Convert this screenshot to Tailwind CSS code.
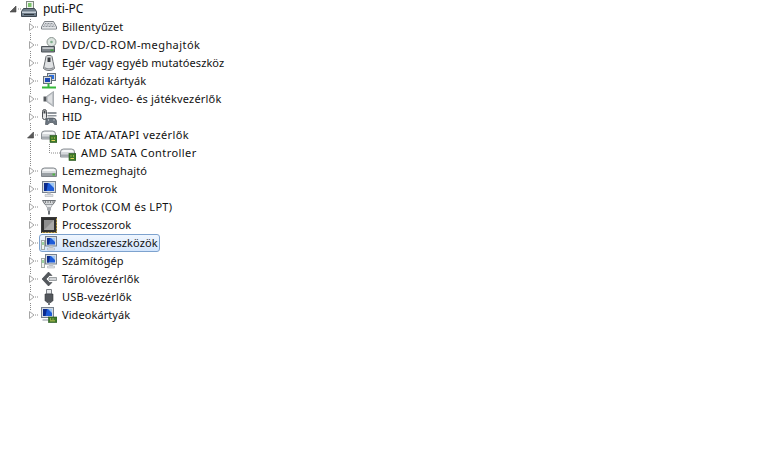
<!DOCTYPE html>
<html lang="en">
<head>
  <meta charset="UTF-8">
  <title>Eszközkezelő</title>
  <script src="https://cdn.jsdelivr.net/npm/@tailwindcss/browser@4"></script>
</head>
<body class="bg-white h-[462px] overflow-hidden font-['Noto_Sans',sans-serif] text-[11px] tracking-[0.08px] text-[#111]">
  <svg width="0" height="0" class="absolute">
    <defs>
      <!-- tree connector for a top level row -->
      <symbol id="line" viewBox="0 0 16 18">
        <path d="M7.500 1v1M7.500 3v1M7.500 15v1M7.500 17v1M12 9h1M14 9h1" stroke="#8a8a8a" fill="none"/>
      </symbol>
      <symbol id="lineEnd" viewBox="0 0 16 18">
        <path d="M7.500 1v1M7.500 3v1M12 9h1M14 9h1" stroke="#8a8a8a" fill="none"/>
      </symbol>
      <symbol id="closed" viewBox="0 0 16 18">
        <path d="M6.500 5.500v7l4.500-3.500z" fill="#fff" stroke="#a6a6a6"/>
      </symbol>
      <symbol id="open" viewBox="0 0 16 18">
        <path d="M10.500 6v6h-6z" fill="#595959" stroke="#404040" stroke-width=".6"/>
      </symbol>
      <symbol id="display" viewBox="0 0 16 16">
        <rect x="1.500" y=".5" width="13" height="11" fill="#d5dbe2" stroke="#77818e"/>
        <rect x="3" y="2" width="10" height="8" fill="#1d5bd8"/>
        <path d="M3 2h4l-1.500 8H3z" fill="#0a2a8c"/>
        <path d="M8 2h5v5z" fill="#9cc6f4"/>
        <path d="M6.500 11.500h3l.5 2h-4z" fill="#c3c7cc"/>
        <path d="M4 13.500h8v2H4z" fill="#e1e3e6" stroke="#a4a9b0" stroke-width=".5"/>
      </symbol>
      <symbol id="system" viewBox="0 0 16 16">
        <rect x="4.500" y="1.500" width="11" height="9.500" fill="#d5dbe2" stroke="#77818e"/>
        <rect x="6" y="3" width="8" height="6.500" fill="#1d5bd8"/>
        <path d="M6 3h3l-1 6.500H6z" fill="#0a2a8c"/>
        <path d="M10 3h4v4z" fill="#9cc6f4"/>
        <path d="M8.500 11h3l.5 2h-4z" fill="#c3c7cc"/>
        <path d="M6.500 13h7v2h-7z" fill="#e1e3e6" stroke="#a4a9b0" stroke-width=".5"/>
        <rect x=".5" y="5.500" width="3" height="9" fill="#f2f4f2" stroke="#a3aaa6"/>
        <path d="M1.500 7h1v3h-1z" fill="#44b04a"/>
      </symbol>
      <symbol id="ide" viewBox="0 0 16 16">
        <path d="M.5 7q0-3 3-3h8q3 0 3 3v5H.5z" fill="#d6d9dc" stroke="#8b9095"/>
        <path d="M1.500 6q1-1 3-1h7q1 0 2 1v1h-12z" fill="#f6f7f8"/>
        <path d="M1 9.500h13v2H1z" fill="#a4a9ae"/>
        <rect x="9" y="8.500" width="7" height="7" fill="#3e7a2a" stroke="#22501a" stroke-width=".6"/>
        <path d="M10.500 10.500h1v1h-1zM13 10.500h1v1h-1zM10.500 13h3.500v1h-3.500z" fill="#e4d860"/>
      </symbol>
    </defs>
  </svg>

  <div class="flex flex-col">
    <!-- puti-PC -->
    <div class="flex h-[18px] items-center">
      <svg width="15" height="18" class="ml-[6px] shrink-0" viewBox="0 0 15 18"><path d="M10 6v6H4z" fill="#595959" stroke="#404040" stroke-width=".6"/><path d="M12 9h1M14 9h1" stroke="#8a8a8a"/></svg>
      <svg width="16" height="16" class="shrink-0" viewBox="0 0 16 16">
        <rect x="5.500" y=".5" width="7" height="7" fill="#eef3ee" stroke="#7f8a80"/>
        <rect x="7" y="2" width="3.500" height="4" fill="#7cc26a"/>
        <path d="M2.500 7.500h11l2 3v5H.5v-5z" fill="#6f7d8a" stroke="#3d4650"/>
        <path d="M1 10.500h14v1.500H1z" fill="#c6ced6"/>
        <path d="M3 13h10v1H3z" fill="#2e363e"/>
      </svg>
      <span class="ml-[6px] leading-[18px] text-[12px] tracking-[-0.1px]">puti-PC</span>
    </div>

    <!-- Billentyűzet -->
    <div class="flex h-[18px] items-center">
      <div class="relative w-[16px] h-[18px] ml-[23px] shrink-0">
        <svg width="16" height="18" class="absolute top-0 left-0"><use href="#line"/></svg>
        <svg width="16" height="18" class="absolute top-0 left-0"><use href="#closed"/></svg>
      </div>
      <div class="flex items-center h-[18px] pl-[2px] pr-[3px] gap-[5px]">
        <svg width="16" height="16" viewBox="0 0 16 16">
          <path d="M3.500 2.500h9l3 5.500v2H.5V8z" fill="#e3e5e8" stroke="#7b8085"/>
          <path d="M4 4.500h8M3 6h10M2 7.500h12" stroke="#8f959b" stroke-dasharray="1 .5"/>
          <path d="M1 9h14v.8H1z" fill="#c6cacd"/>
        </svg>
        <span>Billentyűzet</span>
      </div>
    </div>

    <!-- DVD/CD-ROM-meghajtók -->
    <div class="flex h-[18px] items-center">
      <div class="relative w-[16px] h-[18px] ml-[23px] shrink-0">
        <svg width="16" height="18" class="absolute top-0 left-0"><use href="#line"/></svg>
        <svg width="16" height="18" class="absolute top-0 left-0"><use href="#closed"/></svg>
      </div>
      <div class="flex items-center h-[18px] pl-[2px] pr-[3px] gap-[5px]">
        <svg width="16" height="16" viewBox="0 0 16 16">
          <circle cx="10.500" cy="5" r="4.500" fill="#dce4df" stroke="#8a9490"/>
          <circle cx="10.500" cy="5" r="1.300" fill="#7fae8c"/>
          <path d="M.5 9.500h13v5.500H.5z" fill="#7d848a" stroke="#4f555b"/>
          <path d="M1.500 10.500h11v1.200h-11z" fill="#e2e4e6"/>
          <path d="M9.500 12.500h3v1.500h-3z" fill="#3ea83a"/>
        </svg>
        <span class="tracking-[0.43px]">DVD/CD-ROM-meghajtók</span>
      </div>
    </div>

    <!-- Egér -->
    <div class="flex h-[18px] items-center">
      <div class="relative w-[16px] h-[18px] ml-[23px] shrink-0">
        <svg width="16" height="18" class="absolute top-0 left-0"><use href="#line"/></svg>
        <svg width="16" height="18" class="absolute top-0 left-0"><use href="#closed"/></svg>
      </div>
      <div class="flex items-center h-[18px] pl-[2px] pr-[3px] gap-[5px]">
        <svg width="16" height="16" viewBox="0 0 16 16">
          <path d="M5 1.500q0-1 3-1t3 1l1 5 1.500 7q-2 2-5.500 2t-5.500-2L4 6.500z" fill="#dfe1e3" stroke="#666a6e"/>
          <path d="M6.500 2.500h3v4.500h-3z" fill="#3a3e42"/>
          <path d="M3.500 12q4.500 2.500 9 0v1.500q-4.500 2-9 0z" fill="#8c9095"/>
        </svg>
        <span>Egér vagy egyéb mutatóeszköz</span>
      </div>
    </div>

    <!-- Hálózati kártyák -->
    <div class="flex h-[18px] items-center">
      <div class="relative w-[16px] h-[18px] ml-[23px] shrink-0">
        <svg width="16" height="18" class="absolute top-0 left-0"><use href="#line"/></svg>
        <svg width="16" height="18" class="absolute top-0 left-0"><use href="#closed"/></svg>
      </div>
      <div class="flex items-center h-[18px] pl-[2px] pr-[3px] gap-[5px]">
        <svg width="16" height="16" viewBox="0 0 16 16">
          <rect x="6.500" y=".5" width="8" height="7" fill="#d8dde2" stroke="#66707a"/>
          <rect x="8" y="2" width="5" height="4" fill="#2a6fe0"/>
          <rect x="2.500" y="3.500" width="8" height="7" fill="#d8dde2" stroke="#66707a"/>
          <rect x="4" y="5" width="5" height="4" fill="#1c49b4"/>
          <path d="M7.500 10.500v3M1 14.500h14" stroke="#35b83a" stroke-width="2" fill="none"/>
        </svg>
        <span>Hálózati kártyák</span>
      </div>
    </div>

    <!-- Hang -->
    <div class="flex h-[18px] items-center">
      <div class="relative w-[16px] h-[18px] ml-[23px] shrink-0">
        <svg width="16" height="18" class="absolute top-0 left-0"><use href="#line"/></svg>
        <svg width="16" height="18" class="absolute top-0 left-0"><use href="#closed"/></svg>
      </div>
      <div class="flex items-center h-[18px] pl-[2px] pr-[3px] gap-[5px]">
        <svg width="16" height="16" viewBox="0 0 16 16">
          <path d="M2.500 5.500h3v5h-3z" fill="#55595d"/>
          <path d="M5.500 5.500l7-5v15l-7-5z" fill="#c0c4c8" stroke="#92979c" stroke-width=".7"/>
          <path d="M7 6l4-3v10l-4-3z" fill="#dfe1e3"/>
        </svg>
        <span class="tracking-[0.18px]">Hang-, video- és játékvezérlők</span>
      </div>
    </div>

    <!-- HID -->
    <div class="flex h-[18px] items-center">
      <div class="relative w-[16px] h-[18px] ml-[23px] shrink-0">
        <svg width="16" height="18" class="absolute top-0 left-0"><use href="#line"/></svg>
        <svg width="16" height="18" class="absolute top-0 left-0"><use href="#closed"/></svg>
      </div>
      <div class="flex items-center h-[18px] pl-[2px] pr-[3px] gap-[5px]">
        <svg width="16" height="16" viewBox="0 0 16 16">
          <path d="M1.500 2.500q0-2 2-2t2 2v6q0 2-2 2t-2-2z" fill="#e6e7e8" stroke="#4b4f53"/>
          <path d="M2.500 1.500h2v3h-2z" fill="#44484c"/>
          <path d="M6.500 3h9v2h-9zM6.500 6h9v1.500h-9z" fill="#8f959b"/>
          <path d="M5 10q2-1.500 4-1h3q3 0 3.500 3l.5 3.500h-2.500l-1.500-2H9l-2 2H4.500z" fill="#6c7680" stroke="#3c444c" stroke-width=".6"/>
          <path d="M12.500 10.500h1v1h-1zM7 10.500h1v1H7z" fill="#f2f2f2"/>
        </svg>
        <span>HID</span>
      </div>
    </div>

    <!-- IDE ATA/ATAPI vezérlők -->
    <div class="flex h-[18px] items-center">
      <div class="relative w-[16px] h-[18px] ml-[23px] shrink-0">
        <svg width="16" height="18" class="absolute top-0 left-0"><use href="#line"/></svg>
        <svg width="16" height="18" class="absolute top-0 left-0"><use href="#open"/></svg>
      </div>
      <div class="flex items-center h-[18px] pl-[2px] pr-[3px] gap-[5px]">
        <svg width="16" height="16"><use href="#ide"/></svg>
        <span class="tracking-[0.4px]">IDE ATA/ATAPI vezérlők</span>
      </div>
    </div>

    <!-- AMD SATA Controller -->
    <div class="flex h-[18px] items-center">
      <svg width="12" height="18" class="ml-[23px] shrink-0" viewBox="0 0 12 18"><path d="M7.500 1v1M7.500 3v1M7.500 5v1M7.500 7v1M7.500 9v1M7.500 11v1M7.500 13v1M7.500 15v1M7.500 17v1" stroke="#8a8a8a"/></svg>
      <svg width="25" height="18" class="shrink-0" viewBox="0 0 25 18"><path d="M14.500 0v1M14.500 2v1M14.500 4v1M14.500 6v1M14.500 8v1M16 9h1M18 9h1M20 9h1M22 9h1M24 9h1" stroke="#8a8a8a"/></svg>
      <div class="flex items-center h-[18px] pr-[3px] gap-[5px]">
        <svg width="16" height="16"><use href="#ide"/></svg>
        <span class="tracking-[0.45px]">AMD SATA Controller</span>
      </div>
    </div>

    <!-- Lemezmeghajtó -->
    <div class="flex h-[18px] items-center">
      <div class="relative w-[16px] h-[18px] ml-[23px] shrink-0">
        <svg width="16" height="18" class="absolute top-0 left-0"><use href="#line"/></svg>
        <svg width="16" height="18" class="absolute top-0 left-0"><use href="#closed"/></svg>
      </div>
      <div class="flex items-center h-[18px] pl-[2px] pr-[3px] gap-[5px]">
        <svg width="16" height="16" viewBox="0 0 16 16">
          <path d="M.5 8q0-3 3-3h9q3 0 3 3v5.500H.5z" fill="#d9dcdf" stroke="#80858a"/>
          <path d="M1.500 7q1-1 3-1h7q2 0 3 1v1h-13z" fill="#f6f7f8"/>
          <path d="M1 10h14v3H1z" fill="#9aa0a5"/>
          <path d="M11.500 10.500h2.500v2h-2.500z" fill="#4fb544"/>
        </svg>
        <span class="tracking-[0.15px]">Lemezmeghajtó</span>
      </div>
    </div>

    <!-- Monitorok -->
    <div class="flex h-[18px] items-center">
      <div class="relative w-[16px] h-[18px] ml-[23px] shrink-0">
        <svg width="16" height="18" class="absolute top-0 left-0"><use href="#line"/></svg>
        <svg width="16" height="18" class="absolute top-0 left-0"><use href="#closed"/></svg>
      </div>
      <div class="flex items-center h-[18px] pl-[2px] pr-[3px] gap-[5px]">
        <svg width="16" height="16"><use href="#display"/></svg>
        <span class="tracking-[0.2px]">Monitorok</span>
      </div>
    </div>

    <!-- Portok -->
    <div class="flex h-[18px] items-center">
      <div class="relative w-[16px] h-[18px] ml-[23px] shrink-0">
        <svg width="16" height="18" class="absolute top-0 left-0"><use href="#line"/></svg>
        <svg width="16" height="18" class="absolute top-0 left-0"><use href="#closed"/></svg>
      </div>
      <div class="flex items-center h-[18px] pl-[2px] pr-[3px] gap-[5px]">
        <svg width="16" height="16" viewBox="0 0 16 16">
          <path d="M1.500 1.500h13l-2.500 4h-8z" fill="#d4d7da" stroke="#6c7176"/>
          <path d="M4 3h1M6.500 3h1M9 3h1M11.500 3h1" stroke="#333"/>
          <path d="M4.500 5.500h7l-1.500 3h-4z" fill="#e2e4e6" stroke="#8a8f94" stroke-width=".6"/>
          <path d="M6 8.500h4v3H6z" fill="#a8adb2"/>
          <path d="M7 11.500h2v4H7z" fill="#70757a"/>
        </svg>
        <span class="tracking-[0.29px]">Portok (COM és LPT)</span>
      </div>
    </div>

    <!-- Processzorok -->
    <div class="flex h-[18px] items-center">
      <div class="relative w-[16px] h-[18px] ml-[23px] shrink-0">
        <svg width="16" height="18" class="absolute top-0 left-0"><use href="#line"/></svg>
        <svg width="16" height="18" class="absolute top-0 left-0"><use href="#closed"/></svg>
      </div>
      <div class="flex items-center h-[18px] pl-[2px] pr-[3px] gap-[5px]">
        <svg width="16" height="16" viewBox="0 0 16 16">
          <rect x=".5" y=".5" width="15" height="15" fill="#2f2f2f" stroke="#3a3a3a"/>
          <path d="M1 15.500h14.500V1" fill="none" stroke="#c8a84a" stroke-dasharray="1 .5"/>
          <rect x="3" y="3" width="10" height="10" fill="#a9a9a9"/>
          <path d="M3 3h10L3 13z" fill="#8e8e8e"/>
        </svg>
        <span>Processzorok</span>
      </div>
    </div>

    <!-- Rendszereszközök -->
    <div class="flex h-[18px] items-center">
      <div class="relative w-[16px] h-[18px] ml-[23px] shrink-0">
        <svg width="16" height="18" class="absolute top-0 left-0"><use href="#line"/></svg>
        <svg width="16" height="18" class="absolute top-0 left-0"><use href="#closed"/></svg>
      </div>
      <div class="flex items-center h-[18px] pl-[1px] pr-[1px] gap-[5px] border border-[#7da2ce] rounded-[3px] bg-gradient-to-b from-[#f0f6fe] to-[#d2e5fd]">
        <svg width="16" height="16"><use href="#system"/></svg>
        <span>Rendszereszközök</span>
      </div>
    </div>

    <!-- Számítógép -->
    <div class="flex h-[18px] items-center">
      <div class="relative w-[16px] h-[18px] ml-[23px] shrink-0">
        <svg width="16" height="18" class="absolute top-0 left-0"><use href="#line"/></svg>
        <svg width="16" height="18" class="absolute top-0 left-0"><use href="#closed"/></svg>
      </div>
      <div class="flex items-center h-[18px] pl-[2px] pr-[3px] gap-[5px]">
        <svg width="16" height="16"><use href="#system"/></svg>
        <span>Számítógép</span>
      </div>
    </div>

    <!-- Tárolóvezérlők -->
    <div class="flex h-[18px] items-center">
      <div class="relative w-[16px] h-[18px] ml-[23px] shrink-0">
        <svg width="16" height="18" class="absolute top-0 left-0"><use href="#line"/></svg>
        <svg width="16" height="18" class="absolute top-0 left-0"><use href="#closed"/></svg>
      </div>
      <div class="flex items-center h-[18px] pl-[2px] pr-[3px] gap-[5px]">
        <svg width="16" height="16" viewBox="0 0 16 16">
          <path d="M1 8l6.500-7L11 4.500H8.500L5 8l3.500 3.500H11L7.500 15z" fill="#54585d" stroke="#2f3337" stroke-width=".5"/>
          <path d="M8 6.500h7.500v3H8z" fill="#d2d5d8" stroke="#6a6f74" stroke-width=".6"/>
        </svg>
        <span class="tracking-[0.22px]">Tárolóvezérlők</span>
      </div>
    </div>

    <!-- USB-vezérlők -->
    <div class="flex h-[18px] items-center">
      <div class="relative w-[16px] h-[18px] ml-[23px] shrink-0">
        <svg width="16" height="18" class="absolute top-0 left-0"><use href="#line"/></svg>
        <svg width="16" height="18" class="absolute top-0 left-0"><use href="#closed"/></svg>
      </div>
      <div class="flex items-center h-[18px] pl-[2px] pr-[3px] gap-[5px]">
        <svg width="16" height="16" viewBox="0 0 16 16">
          <path d="M5.500.5h5v4.500h-5z" fill="#e6e8ea" stroke="#7c8186"/>
          <path d="M4 5h8v6.500L10 13.500H6l-2-2z" fill="#53575c" stroke="#36393d" stroke-width=".6"/>
          <path d="M7 13.500h2V16H7z" fill="#787d82"/>
        </svg>
        <span class="tracking-[0.17px]">USB-vezérlők</span>
      </div>
    </div>

    <!-- Videokártyák -->
    <div class="flex h-[18px] items-center">
      <div class="relative w-[16px] h-[18px] ml-[23px] shrink-0">
        <svg width="16" height="18" class="absolute top-0 left-0"><use href="#lineEnd"/></svg>
        <svg width="16" height="18" class="absolute top-0 left-0"><use href="#closed"/></svg>
      </div>
      <div class="flex items-center h-[18px] pl-[2px] pr-[3px] gap-[5px]">
        <svg width="16" height="16" viewBox="0 0 16 16">
          <rect x=".5" y=".5" width="12" height="10" fill="#d5dbe2" stroke="#77818e"/>
          <rect x="2" y="2" width="9" height="7" fill="#1d5bd8"/>
          <path d="M2 2h4l-1.500 7H2z" fill="#0a2a8c"/>
          <path d="M7 2h4v4z" fill="#9cc6f4"/>
          <path d="M1.500 12h6v2h-6z" fill="#c3c7cc"/>
          <rect x="7.500" y="10" width="8.500" height="5.500" fill="#3e7a2a" stroke="#22501a" stroke-width=".6"/>
          <path d="M9 11.500h1v1H9zM11.500 11.500h1v1h-1zM9 13.500h5v.8H9z" fill="#e4d860"/>
        </svg>
        <span>Videokártyák</span>
      </div>
    </div>
  </div>
</body>
</html>
